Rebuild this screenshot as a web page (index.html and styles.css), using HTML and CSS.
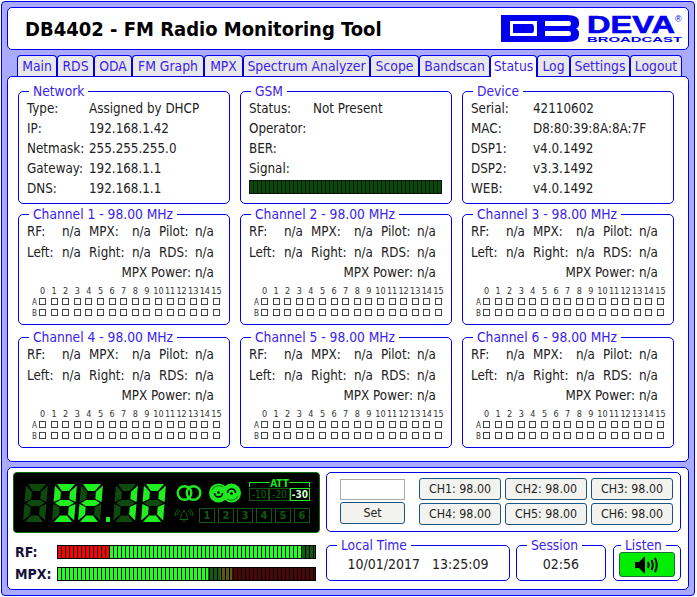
FILE: index.html
```html
<!DOCTYPE html>
<html lang="en">
<head>
    <meta charset="UTF-8">
    <meta name="viewport" content="width=device-width, initial-scale=1.0">
    <title>DB4402 - FM Radio Monitoring Tool</title>
    <link rel="stylesheet" href="styles.css">
</head>
<body>
<div class="page">

    <!-- HEADER -->
    <header class="top-bar">
        <h1>DB4402 - FM Radio Monitoring Tool</h1>
        <svg class="logo" width="184" height="36" viewBox="0 -3 184 36" role="img" aria-label="DEVA Broadcast">
            <path fill="#0000ee" fill-rule="evenodd" d="M0 1H66Q78 1 78 8V10Q78 13 75 14.500Q78 16 78 19V21Q78 28 66 28H0ZM9 7V22H36V7ZM44 7V12H68Q70 12 70 9.500Q70 7 68 7ZM44 17V22H68Q70 22 70 19.500Q70 17 68 17Z"/>
            <path fill="#0000ee" d="M12 10H31Q33 10 33 14.500Q33 19 31 19H12Z"/>
            <text class="logo-deva" x="86" y="19" textLength="88" lengthAdjust="spacingAndGlyphs">DEVA</text>
            <text class="logo-reg" x="174" y="8">®</text>
            <text class="logo-sub" x="86" y="28" textLength="95" lengthAdjust="spacingAndGlyphs">BROADCAST</text>
        </svg>
    </header>

    <!-- TABS -->
    <nav class="tabs">
        <a href="#">Main</a>
        <a href="#">RDS</a>
        <a href="#">ODA</a>
        <a href="#">FM Graph</a>
        <a href="#">MPX</a>
        <a href="#">Spectrum Analyzer</a>
        <a href="#">Scope</a>
        <a href="#">Bandscan</a>
        <a href="#" class="active">Status</a>
        <a href="#">Log</a>
        <a href="#">Settings</a>
        <a href="#">Logout</a>
    </nav>

    <!-- STATUS -->
    <main class="content">
        <div class="status-grid" id="status-grid">
            <fieldset class="box info-box">
                <legend>Network</legend>
                <div class="info-row"><span>Type:</span><span>Assigned by DHCP</span></div>
                <div class="info-row"><span>IP:</span><span>192.168.1.42</span></div>
                <div class="info-row"><span>Netmask:</span><span>255.255.255.0</span></div>
                <div class="info-row"><span>Gateway:</span><span>192.168.1.1</span></div>
                <div class="info-row"><span>DNS:</span><span>192.168.1.1</span></div>
            </fieldset>
            <fieldset class="box info-box gsm-box">
                <legend>GSM</legend>
                <div class="info-row"><span>Status:</span><span>Not Present</span></div>
                <div class="info-row"><span>Operator:</span></div>
                <div class="info-row"><span>BER:</span></div>
                <div class="info-row"><span>Signal:</span></div>
                <div class="signal-bar"></div>
            </fieldset>
            <fieldset class="box info-box">
                <legend>Device</legend>
                <div class="info-row"><span>Serial:</span><span>42110602</span></div>
                <div class="info-row"><span>MAC:</span><span>D8:80:39:8A:8A:7F</span></div>
                <div class="info-row"><span>DSP1:</span><span>v4.0.1492</span></div>
                <div class="info-row"><span>DSP2:</span><span>v3.3.1492</span></div>
                <div class="info-row"><span>WEB:</span><span>v4.0.1492</span></div>
            </fieldset>
        </div>
    </main>

    <!-- BOTTOM PANEL -->
    <section class="panel">
        <div class="panel-left">
            <div class="display">
                <div class="digits" id="digits" aria-label="92.10"></div>
                <div class="display-side">
                    <div class="side-top">
                        <svg class="ico-stereo" width="26" height="18" viewBox="0 0 26 18">
                            <circle cx="8.500" cy="9" r="6.800" fill="none" stroke="#1ee81e" stroke-width="2.400"/>
                            <circle cx="17.500" cy="9" r="6.800" fill="none" stroke="#1ee81e" stroke-width="2.400"/>
                        </svg>
                        <svg class="ico-rds" width="32" height="22" viewBox="0 0 32 22">
                            <circle cx="9.500" cy="11" r="9.500" fill="#1ee81e"/>
                            <circle cx="22.500" cy="11" r="9.500" fill="#1ee81e"/>
                            <path d="M3 8A7.500 7.500 0 0 1 14 5M29 14A7.500 7.500 0 0 1 18 17" fill="none" stroke="#0a7a0a"/>
                            <path d="M5.500 11A4 4 0 0 0 13.500 11M18.500 11A4 4 0 0 1 26.500 11" fill="none" stroke="#000" stroke-width="1.600"/>
                            <circle cx="9.500" cy="10.500" r="1.300" fill="#000"/>
                            <circle cx="22.500" cy="11.500" r="1.300" fill="#000"/>
                        </svg>
                        <div class="att">
                            <div class="att-title">ATT</div>
                            <div class="att-row">
                                <span>-10</span><span>-20</span><span class="on">-30</span>
                            </div>
                        </div>
                    </div>
                    <div class="side-bottom">
                        <svg class="ico-bell" width="22" height="15" viewBox="0 0 22 15">
                            <g fill="none" stroke="#0f6a0f">
                                <path d="M7 11.500C8.500 9 7.500 4 11 3.500C14.500 4 13.500 9 15 11.500H7Z"/>
                                <path d="M10 13H12M11 1.500V3"/>
                                <path d="M4.500 7C4.500 5 5.500 3.500 7 2.500M2 8C2 5 3.500 2 5.500 1"/>
                                <path d="M17.500 7C17.500 5 16.500 3.500 15 2.500M20 8C20 5 18.500 2 16.500 1"/>
                            </g>
                        </svg>
                        <div class="presets">
                            <span>1</span><span>2</span><span>3</span><span>4</span><span>5</span><span>6</span>
                        </div>
                    </div>
                </div>
            </div>
            <div class="meter-row">
                <span class="meter-label">RF:</span>
                <div class="meter meter-rf"></div>
            </div>
            <div class="meter-row">
                <span class="meter-label">MPX:</span>
                <div class="meter meter-mpx"></div>
            </div>
        </div>

        <div class="panel-right">
            <fieldset class="box tune-box">
                <div class="tune-set">
                    <input type="text" class="tune-input">
                    <button class="btn">Set</button>
                </div>
                <div class="tune-channels">
                    <button class="btn">CH1: 98.00</button>
                    <button class="btn">CH2: 98.00</button>
                    <button class="btn">CH3: 98.00</button>
                    <button class="btn">CH4: 98.00</button>
                    <button class="btn">CH5: 98.00</button>
                    <button class="btn">CH6: 98.00</button>
                </div>
            </fieldset>
            <div class="clock-row">
                <fieldset class="box clock-box time-box">
                    <legend>Local Time</legend>
                    <span>10/01/2017</span><span>13:25:09</span>
                </fieldset>
                <fieldset class="box clock-box session-box">
                    <legend>Session</legend>
                    <span>02:56</span>
                </fieldset>
                <fieldset class="box listen-box">
                    <legend>Listen</legend>
                    <button class="listen-btn" aria-label="Listen">
                        <svg width="26" height="18" viewBox="0 0 26 18">
                            <path d="M1 6H5L11 0V18L5 12H1Z" fill="#000"/>
                            <g fill="none" stroke="#000" stroke-width="2">
                                <path d="M14 6Q15.500 9 14 12"/>
                                <path d="M17.500 4Q20 9 17.500 14"/>
                                <path d="M21 2Q24.500 9 21 16"/>
                            </g>
                        </svg>
                    </button>
                </fieldset>
            </div>
        </div>
    </section>
</div>

<script src="script.js"></script>
</body>
</html>
```

FILE: styles.css
```css
/* GENERAL */
* {
    margin: 0;
    padding: 0;
    box-sizing: border-box;
    font-family: "DejaVu Sans Condensed", "DejaVu Sans", sans-serif;
}

body {
    background-color: white;
    color: #222;
    font-size: 13.300px;
}

.page {
    width: 694px;
    height: 595px;
    margin: 1px 0 0 1px;
    padding: 5px;
    background-color: #aaaaff;
    border: 1px solid #0000ee;
    border-radius: 4px;
}

/* HEADER */
.top-bar {
    display: flex;
    justify-content: space-between;
    align-items: center;
    height: 43px;
    padding: 0 3px 0 17px;
    background-color: white;
    border: 1px solid #0000ee;
    border-radius: 5px;
}

.top-bar h1 {
    font-size: 20px;
    font-weight: bold;
    color: black;
}

.logo-deva {
    font-family: "Liberation Sans", sans-serif;
    font-size: 23px;
    font-weight: bold;
    fill: #0000ee;
    stroke: #0000ee;
    stroke-width: 0.6px;
}

.logo-reg {
    font-family: "Liberation Sans", sans-serif;
    font-size: 9px;
    fill: #0000ee;
}

.logo-sub {
    font-family: "Liberation Sans", sans-serif;
    font-size: 8px;
    font-weight: bold;
    fill: #0000ee;
}

/* TABS */
.tabs {
    display: flex;
    height: 21px;
    margin-top: 5px;
    padding-left: 10px;
    position: relative;
    z-index: 1;
}

.tabs a {
    display: block;
    height: 21px;
    line-height: 20px;
    text-align: center;
    text-decoration: none;
    color: #3a22f0;
    font-size: 13.800px;
    background-color: #e8e8e8;
    border: 1px solid #0000ee;
    border-bottom: none;
    border-radius: 4px 4px 0 0;
}

.tabs a.active {
    height: 22px;
    background-color: white;
}

/* tab widths follow the labels */
.tabs a:nth-child(1) { width: 40px; }
.tabs a:nth-child(2) { width: 37px; }
.tabs a:nth-child(3) { width: 38px; }
.tabs a:nth-child(4) { width: 72px; }
.tabs a:nth-child(5) { width: 39px; }
.tabs a:nth-child(6) { width: 127px; }
.tabs a:nth-child(7) { width: 49px; }
.tabs a:nth-child(8) { width: 71px; }
.tabs a:nth-child(9) { width: 47px; }
.tabs a:nth-child(10) { width: 33px; }
.tabs a:nth-child(11) { width: 60px; }
.tabs a:nth-child(12) { width: 52px; }

/* STATUS AREA */
.content {
    height: 386px;
    padding: 6px 10px 0;
    background-color: white;
    border: 1px solid #0000ee;
    border-radius: 5px;
}

.status-grid {
    display: grid;
    grid-template-columns: repeat(3, 212px);
    column-gap: 10px;
    grid-auto-rows: 123px;
}

.box {
    border: 1px solid #0000ee;
    border-radius: 5px;
    padding: 0 8px;
    min-width: 0;
}

.box legend {
    margin-left: 2px;
    padding: 0 4px;
    font-size: 13.700px;
    line-height: 16px;
    color: #3a22f0;
}

.info-box {
    height: 121px;
}

.info-row {
    display: flex;
    height: 20px;
    line-height: 20px;
}

.info-row span:first-child {
    width: 62px;
}

.gsm-box .info-row span:first-child {
    width: 64px;
}

.signal-bar {
    width: 193px;
    height: 14px;
    margin-top: 1px;
    background: repeating-linear-gradient(90deg, #0c4a0c 0, #0c4a0c 3px, #021a02 3px, #021a02 4px);
    border: 1px solid #111;
}

/* CHANNEL BOXES */
.channel-box {
    height: 119px;
}

.channel-grid {
    display: grid;
    grid-template-columns: 35px 27px 43px 27px 36px 1fr;
    grid-auto-rows: 20.500px;
    line-height: 20px;
}

.channel-power {
    grid-column: 1 / 6;
    text-align: right;
    padding-right: 4px;
}

.matrix {
    display: grid;
    grid-template-columns: 12px repeat(16, 11.600px);
    grid-auto-rows: 11px;
    margin-top: 2px;
    font-size: 9px;
    line-height: 11px;
    color: #333;
}

.matrix .row-label {
    text-align: right;
    padding-right: 2px;
    font-size: 8px;
}

.matrix .cell {
    width: 7px;
    height: 7px;
    margin-top: 1px;
    border: 1px solid #444;
}

.matrix .num {
    display: flex;
    justify-content: center;
    width: 7px;
    white-space: nowrap;
}

/* BOTTOM PANEL */
.panel {
    display: flex;
    gap: 6px;
    height: 123px;
    margin-top: 5px;
    padding: 4px 0 0 5px;
    background-color: white;
    border: 1px solid #0000ee;
    border-radius: 5px;
}

.panel-left {
    width: 307px;
}

.panel-right {
    width: 355px;
}

/* FREQUENCY DISPLAY */
.display {
    display: flex;
    height: 61px;
    margin-bottom: 12px;
    padding: 11px 0 0 9px;
    background-color: black;
    border: 1px solid #0a6a0a;
    border-radius: 4px;
}

.digits {
    display: flex;
    flex: none;
    width: 152px;
    height: 39px;
}

.digits svg {
    display: block;
    flex: none;
}

.seg-on {
    fill: #1ff01f;
}

.seg-off {
    fill: #0e4a0e;
}

.display-side {
    margin: -1px 0 0 0;
    width: 135px;
}

.side-top {
    display: flex;
    align-items: flex-start;
    height: 24px;
}

.ico-stereo {
    margin: 1px 7px 0 1px;
    flex: none;
}

.ico-rds {
    margin: -1px 8px 0 0;
    flex: none;
}

.att {
    width: 61px;
    flex: none;
    margin-top: -4px;
}

.att-title {
    position: relative;
    height: 9px;
    line-height: 9px;
    font-size: 10px;
    font-weight: bold;
    text-align: center;
    color: #1ee81e;
}

.att-title::before {
    content: "";
    position: absolute;
    left: 0;
    right: 0;
    top: 3px;
    height: 4px;
    border: 1px solid #1ee81e;
    border-bottom: none;
    clip-path: polygon(0 0, 34% 0, 34% 100%, 66% 100%, 66% 0, 100% 0, 100% 100%, 0 100%);
}

.att-row {
    display: flex;
}

.att-row span {
    flex: 1;
    height: 13px;
    line-height: 11px;
    text-align: center;
    font-size: 10px;
    color: #0f6a0f;
    border: 1px solid #0f5a0f;
}

.att-row span.on {
    color: #d8ffd8;
    font-weight: bold;
    border-color: #1ff01f;
}

.side-bottom {
    display: flex;
    align-items: center;
    margin: 1px 0 0 -2px;
}

.ico-bell {
    flex: none;
    margin-right: 4px;
}

.presets {
    display: flex;
    gap: 3px;
}

.presets span {
    width: 16px;
    height: 15px;
    line-height: 13px;
    text-align: center;
    font-size: 11px;
    font-weight: bold;
    color: #0f5a0f;
    border: 1px solid #0f5a0f;
}

/* LEVEL METERS */
.meter-row {
    display: flex;
    align-items: center;
    height: 14px;
    margin-bottom: 8px;
}

.meter-label {
    width: 44px;
    padding-left: 2px;
    font-size: 14px;
    font-weight: bold;
    color: #10103a;
}

.meter {
    width: 259px;
    height: 14px;
    border: 1px solid black;
}

.meter-rf {
    background:
        repeating-linear-gradient(90deg, transparent 0, transparent 3px, black 3px, black 4px),
        linear-gradient(90deg, #ff0000 0, #ff0000 51px, #22ff22 51px, #22ff22 243px, #145a14 243px);
}

.meter-mpx {
    background:
        repeating-linear-gradient(90deg, transparent 0, transparent 3px, black 3px, black 4px),
        linear-gradient(90deg, #22ff22 0, #22ff22 150px, #145a14 150px, #145a14 162px, #5a5a10 162px, #5a5a10 174px, #4a0808 174px);
}

/* TUNING */
.tune-box {
    display: flex;
    height: 60px;
    padding: 5px 0 0 13px;
}

.tune-set {
    width: 65px;
    margin-right: 14px;
}

.tune-input {
    display: block;
    width: 65px;
    height: 21px;
    margin-top: 1px;
    border: 1px solid #aaa;
    background-color: white;
}

.btn {
    height: 22px;
    font-size: 12.300px;
    color: #222;
    background-color: #f2f2ee;
    border: 1px solid #1c5580;
    border-radius: 3px;
}

.tune-set .btn {
    width: 65px;
    margin-top: 2px;
}

.tune-channels {
    display: grid;
    grid-template-columns: repeat(3, 82px);
    grid-auto-rows: 22px;
    gap: 3px 4px;
}

/* CLOCK ROW */
.clock-row {
    display: flex;
    margin-top: 5px;
    height: 45px;
}

.clock-box {
    height: 44px;
    display: flex;
    justify-content: center;
    gap: 12px;
    padding-top: 1px;
    line-height: 20px;
    font-size: 14px;
}

.time-box {
    width: 184px;
    margin-right: 6px;
}

.session-box {
    width: 90px;
    margin-right: 7px;
}

.listen-box {
    width: 68px;
    height: 44px;
    padding: 0 5px;
}

.listen-btn {
    display: flex;
    justify-content: center;
    align-items: center;
    width: 56px;
    height: 25px;
    margin-top: -1px;
    background-color: #00ee00;
    border: 1px solid #1c6a40;
    border-radius: 3px;
}
```

FILE: script.js
```js
// channel boxes
var grid = document.getElementById("status-grid");

for (var c = 1; c <= 6; c++) {
    var html = '<legend>Channel ' + c + ' - 98.00 MHz</legend>';
    html += '<div class="channel-grid">';
    html += '<span>RF:</span><span>n/a</span><span>MPX:</span><span>n/a</span><span>Pilot:</span><span>n/a</span>';
    html += '<span>Left:</span><span>n/a</span><span>Right:</span><span>n/a</span><span>RDS:</span><span>n/a</span>';
    html += '<span class="channel-power">MPX Power:</span><span>n/a</span>';
    html += '</div><div class="matrix"><span></span>';
    for (var i = 0; i < 16; i++) {
        html += '<span class="num">' + i + '</span>';
    }
    ["A", "B"].forEach(function (row) {
        html += '<span class="row-label">' + row + '</span>';
        for (var j = 0; j < 16; j++) {
            html += '<span class="cell"></span>';
        }
    });
    html += '</div>';

    var box = document.createElement("fieldset");
    box.className = "box channel-box";
    box.innerHTML = html;
    grid.appendChild(box);
}

// seven segment readout: a b c d e f g
var SEGS = {
    a: "2,0 20,0 14.5,7 7.5,7",
    b: "22,1.5 15.5,8 15.5,15 22,18",
    c: "22,20 15.5,23 15.5,30.5 22,36.5",
    d: "2,38 7.5,31.5 14.5,31.5 20,38",
    e: "0,20 6.5,23 6.5,30.5 0,36.5",
    f: "0,1.5 6.5,8 6.5,15 0,18",
    g: "1.5,19 6.5,16 15.5,16 20.5,19 15.5,22 6.5,22"
};
var LIT = { " ": "", "0": "abcdef", "1": "bc", "2": "abdeg", "9": "abcdfg" };

function digit(ch, gap) {
    var out = '<svg width="' + (25 + gap) + '" height="39" viewBox="0 0 ' + (25 + gap) + ' 39"><g transform="translate(3 0) skewX(-4.5)">';
    for (var s in SEGS) {
        out += '<polygon points="' + SEGS[s] + '" class="' + (LIT[ch].indexOf(s) >= 0 ? "seg-on" : "seg-off") + '"/>';
    }
    return out + '</g></svg>';
}

var dot = '<svg width="10" height="39" viewBox="0 0 10 39"><rect x="3" y="33" width="4" height="5" fill="#1ff01f"/></svg>';
document.getElementById("digits").innerHTML =
    digit(" ", 4) + digit("9", 1) + digit("2", 0) + dot + digit("1", 3) + digit("0", 0);
```
